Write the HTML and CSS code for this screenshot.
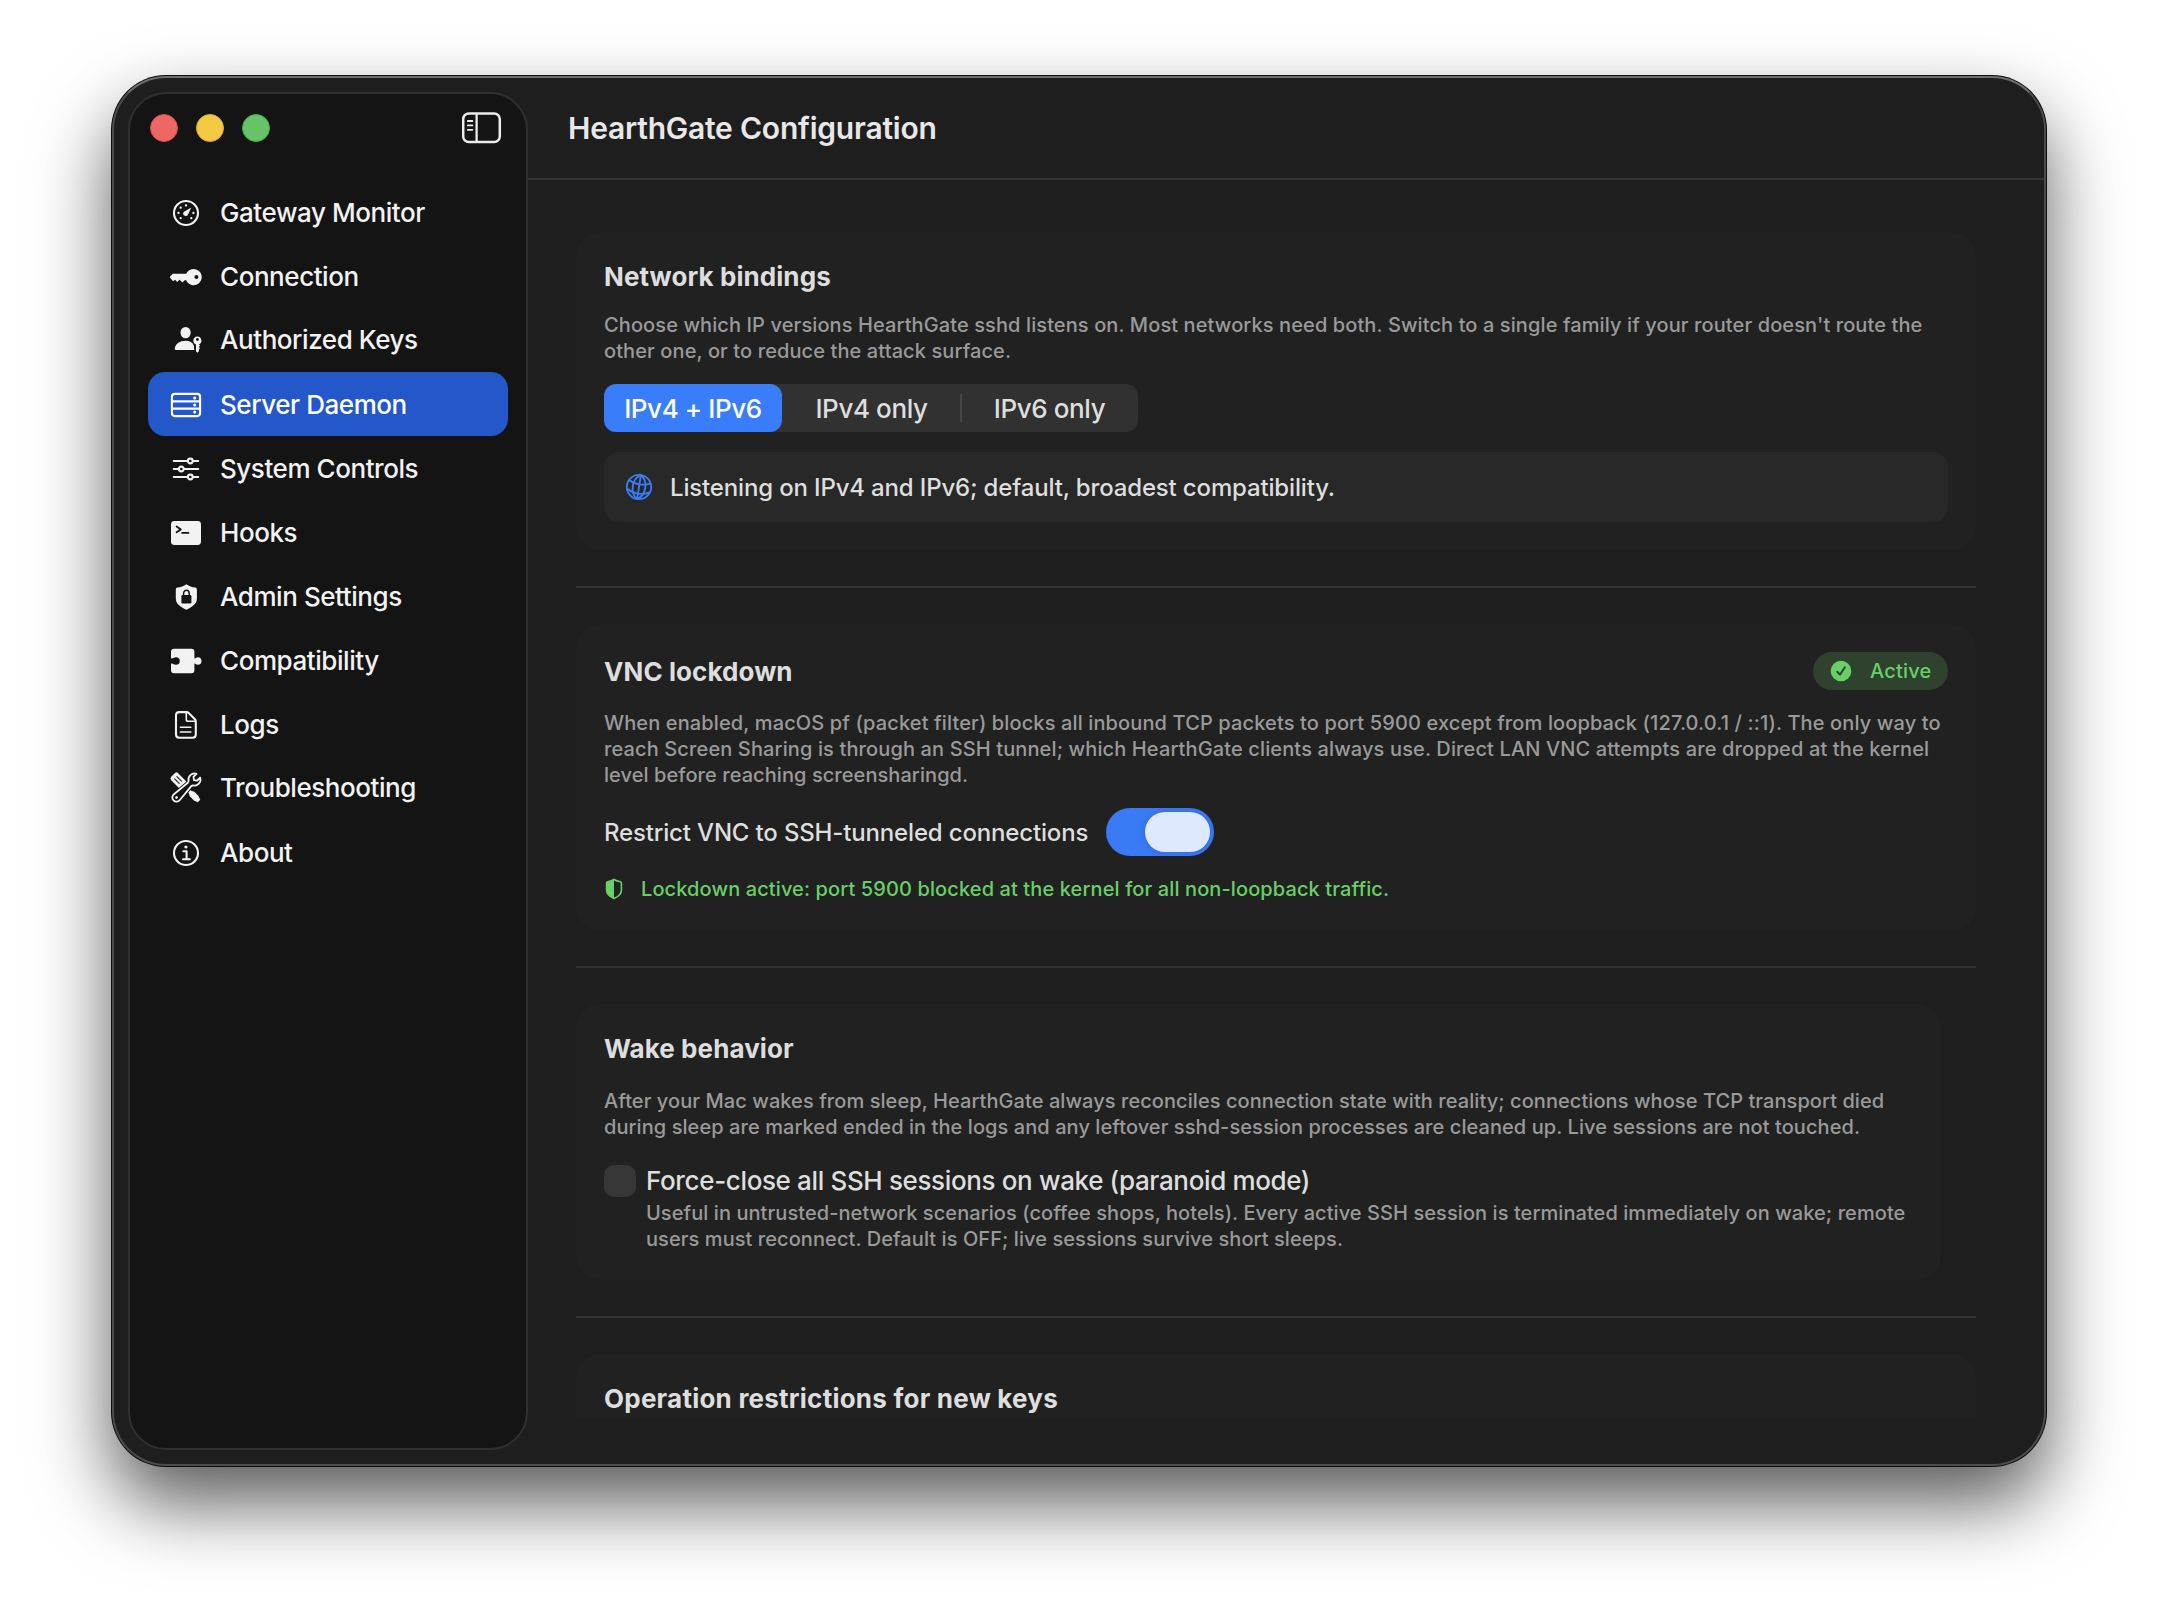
FILE: index.html
```
<!DOCTYPE html>
<html lang="en">
<head>
<meta charset="utf-8">
<title>HearthGate Configuration</title>
<link rel="stylesheet" href="styles.css">
</head>
<body>
<div class="window">
  <aside class="sidebar">
    <div class="sidebar-top">
      <div class="lights">
        <span class="light light-close"></span>
        <span class="light light-min"></span>
        <span class="light light-zoom"></span>
      </div>
      <svg class="toggle-sidebar" viewBox="0 0 40 32" fill="none" stroke="#ececec">
        <rect x="1.2" y="1.4" width="36.6" height="28.6" rx="5.6" stroke-width="2.5"/>
        <path d="M14.6 2v28" stroke-width="2.3"/>
        <path d="M5.8 9h4.6M5.8 13.4h4.6M5.8 17.8h4.6" stroke-width="1.8" stroke-linecap="round"/>
      </svg>
    </div>
    <nav class="nav">
      <a class="nav-item">
        <svg class="nav-icon" viewBox="-18 -18 36 36">
          <circle r="12" class="line"/>
          <g class="solid"><circle cy="-7.6" r="1.15"/><circle cx="-5.3" cy="-5.3" r="1.15"/><circle cx="-7.5" r="1.15"/><circle cx="-5.3" cy="5.2" r="1.15"/><circle cx="5.3" cy="5.2" r="1.15"/><circle cx="7.4" r="1.15"/>
          <path d="M5.3-5.4L1.9 1.7A2.5 2.5 0 1 1-1.6-1.6Z"/></g>
        </svg>
        <span>Gateway Monitor</span>
      </a>
      <a class="nav-item">
        <svg class="nav-icon" viewBox="-18 -18 36 36">
          <path class="solid" fill-rule="evenodd" d="M-13.2-3.2H.2A8.1 8.1 0 1 1 .2 3.3L-1.3 3.2-3.6 5.4-6.4 2.7-8.9 5-10.9 2.8-12.9 4.2-15.8.9Q-16.4 0-15.7-.8ZM10.4-2A2 2 0 1 0 10.4 2 2 2 0 1 0 10.4-2Z"/>
        </svg>
        <span>Connection</span>
      </a>
      <a class="nav-item nav-item-up">
        <svg class="nav-icon" viewBox="-18 -18 36 36">
          <ellipse class="solid" cx="-.4" cy="-7.4" rx="5.1" ry="5.7"/>
          <path class="solid" d="M-.5.7C4 .7 6.6 2.7 7.8 5.4L8.3 9.9H-10Q-11.6 9.9-11.2 8C-10.2 3.7-6.2.7-.5.7Z"/>
          <path class="solid" fill-rule="evenodd" stroke="#141414" stroke-width="1.4" paint-order="stroke" d="M11.3-3.6A4.2 4.2 0 0 1 13 4.4L14 5.6 12.9 7 13.9 8.3 12.9 9.6V11.2L11.5 12.8 10 11.4V4.5A4.2 4.2 0 0 1 11.3-3.6ZM11.4-1.9A1.4 1.4 0 1 0 11.4.9 1.4 1.4 0 1 0 11.4-1.9Z"/>
        </svg>
        <span>Authorized Keys</span>
      </a>
      <a class="nav-item nav-item-active">
        <svg class="nav-icon" viewBox="-18 -18 36 36">
          <rect class="line" x="-14.1" y="-11.1" width="28.2" height="22.2" rx="3"/>
          <path class="line" d="M-14-3.6H14M-14 3.6H14"/>
          <g class="solid"><circle cx="8.7" cy="-7.1" r="1.5"/><circle cx="8.7" r="1.5"/><circle cx="8.7" cy="7.1" r="1.5"/></g>
        </svg>
        <span>Server Daemon</span>
      </a>
      <a class="nav-item">
        <svg class="nav-icon" viewBox="-18 -18 36 36">
          <path class="line" stroke-linecap="round" d="M-12.2-8H1.6M7-8h5.2M-12.2 0H-7.4M-2 0H12.2M-12.2 8H1.6M7 8h5.2"/>
          <g class="line"><circle cx="4.3" cy="-8" r="2.4"/><circle cx="-4.7" r="2.4"/><circle cx="4.3" cy="8" r="2.4"/></g>
        </svg>
        <span>System Controls</span>
      </a>
      <a class="nav-item">
        <svg class="nav-icon" viewBox="-18 -18 36 36">
          <rect class="solid" x="-15" y="-12" width="30" height="24" rx="3.4"/>
          <path d="M-9.4-6.5-5.2-3.6-9.4-.8M-3.8-.1H2.4" fill="none" stroke="#141414" stroke-width="1.8" stroke-linecap="round" stroke-linejoin="round"/>
        </svg>
        <span>Hooks</span>
      </a>
      <a class="nav-item">
        <svg class="nav-icon" viewBox="-18 -18 36 36">
          <path class="solid" d="M.4-12.7C3-10.8 6.2-9.7 9.2-9.4Q10.9-9.2 10.9-7.6V1.6C10.9 7 6.4 10 .4 12.8-5.6 10-10.2 7-10.2 1.6V-7.6Q-10.2-9.2-8.5-9.4C-5.4-9.7-2.2-10.8.4-12.7Z"/>
          <rect x="-4.6" y="-2" width="10" height="8.6" rx="1.3" fill="#141414"/>
          <path d="M-2.4-1.5V-3.6A2.8 3.1 0 0 1 3.2-3.6V-1.5" fill="none" stroke="#141414" stroke-width="1.5"/>
        </svg>
        <span>Admin Settings</span>
      </a>
      <a class="nav-item">
        <svg class="nav-icon" viewBox="-18 -18 36 36">
          <path class="solid" d="M-12-12.3H5.4Q8.4-12.3 8.4-9.3V-2.6C9.4-2.2 9.8-3.8 11.9-3.8A3.6 3.8 0 0 1 11.9 3.8C9.8 3.8 9.4 2.2 8.4 2.6V9.3Q8.4 12.3 5.4 12.3H-12Q-15 12.3-15 9.3V2.7C-12.8 1.9-12.8 3.8-10 3.8A3.8 3.8 0 0 0-10-3.8C-12.8-3.8-12.8-1.9-15-2.7V-9.3Q-15-12.3-12-12.3Z"/>
        </svg>
        <span>Compatibility</span>
      </a>
      <a class="nav-item">
        <svg class="nav-icon" viewBox="-18 -18 36 36">
          <path class="line" stroke-linejoin="round" d="M-6.8-12.9H.6Q1.8-12.9 2.7-12L8.9-5.7Q9.8-4.8 9.8-3.5V9.6Q9.8 12.8 6.6 12.8H-6.8Q-10 12.8-10 9.6V-9.7Q-10-12.9-6.8-12.9Z"/>
          <path class="line thin" d="M.3-12.6V-5.6Q.3-3.7 2.2-3.7H9.4M-5.6 2.3H4.8M-5.6 7H4.8" stroke-linecap="round"/>
        </svg>
        <span>Logs</span>
      </a>
      <a class="nav-item nav-item-up">
        <svg class="nav-icon" viewBox="-18 -18 36 36">
          <g transform="rotate(-45)">
            <path class="solid" d="M-4.9-16Q-4.9-18.4-2.5-18.4H2.5Q4.9-18.4 4.9-16V-4H-4.9Z"/>
            <path d="M-1.6-14.5V-8M1.6-14.5V-8" stroke="#141414" stroke-width="1" stroke-linecap="round"/>
            <path class="solid" d="M-1.7-4H1.7V5.5L3.2 8.6V14.4L1.8 18.4H-1.8L-3.2 14.4V8.6L-1.7 5.5Z"/>
          </g>
          <g transform="rotate(45)">
            <path d="M-2.6-17.4V-13.2L0-11.2 2.6-13.2V-17.4A6.1 6.1 0 0 1 3-6.7L2.4-5 4.1 12.5A4.2 4.2 0 1 1-4.1 12.5L-2.4-5-3-6.7A6.1 6.1 0 0 1-2.6-17.4Z" fill="#141414" stroke="#141414" stroke-width="3.6"/>
            <path d="M-2.6-17.4V-13.2L0-11.2 2.6-13.2V-17.4A6.1 6.1 0 0 1 3-6.7L2.4-5 4.1 12.5A4.2 4.2 0 1 1-4.1 12.5L-2.4-5-3-6.7A6.1 6.1 0 0 1-2.6-17.4Z" class="line wrench" stroke-linejoin="round"/>
            <circle class="solid" cy="13.4" r="1.4"/>
          </g>
        </svg>
        <span>Troubleshooting</span>
      </a>
      <a class="nav-item">
        <svg class="nav-icon" viewBox="-18 -18 36 36">
          <circle r="12" class="line"/>
          <circle class="solid" cx="-.1" cy="-6" r="1.6"/>
          <path class="line" d="M-2.7-1.8H.6V6.2M-3 6.2H3.8" stroke-linecap="round" stroke-linejoin="round"/>
        </svg>
        <span>About</span>
      </a>
    </nav>
  </aside>

  <main class="main">
    <header class="toolbar"><h1>HearthGate Configuration</h1></header>
    <div class="content">
      <section class="card">
        <h2>Network bindings</h2>
        <p class="note">Choose which IP versions HearthGate sshd listens on. Most networks need both. Switch to a single family if your router doesn't route the<br>other one, or to reduce the attack surface.</p>
        <div class="segmented">
          <span class="segment segment-on">IPv4 + IPv6</span>
          <span class="segment">IPv4 only</span>
          <span class="segment segment-divided">IPv6 only</span>
        </div>
        <div class="info">
          <svg class="globe" viewBox="-15 -15 30 30" fill="none" stroke="#3a7dfa" stroke-width="1.8">
            <circle r="12.2"/>
            <g transform="rotate(9)">
              <path d="M0-12.2V12.2M0-12.2C-8.4-7-8.4 7 0 12.2M0-12.2C8.4-7 8.4 7 0 12.2"/>
              <path d="M-11-5.4C-5-1.8 5-1.8 11-5.4M-11.4 3.6C-5 7.6 5 7.6 11.4 3.6"/>
            </g>
          </svg>
          <span class="body-text">Listening on IPv4 and IPv6; default, broadest compatibility.</span>
        </div>
      </section>
      <hr class="rule">
      <section class="card">
        <div class="card-head">
          <h2>VNC lockdown</h2>
          <span class="badge">
            <svg class="badge-icon" viewBox="0 0 22 22"><circle cx="11" cy="11" r="10.3" fill="#68d067"/><path d="M7.2 11.7L10 14.6 14.9 7.3" fill="none" stroke="#2e422e" stroke-width="2" stroke-linecap="round" stroke-linejoin="round"/></svg>
            Active
          </span>
        </div>
        <p class="note note-wide">When enabled, macOS pf (packet filter) blocks all inbound TCP packets to port 5900 except from loopback (127.0.0.1 / ::1). The only way to<br>reach Screen Sharing is through an SSH tunnel; which HearthGate clients always use. Direct LAN VNC attempts are dropped at the kernel<br><span class="note-tight">level before reaching screensharingd.</span></p>
        <div class="switch-row">
          <span class="body-text">Restrict VNC to SSH-tunneled connections</span>
          <span class="switch"><span class="knob"></span></span>
        </div>
        <div class="status">
          <svg class="status-icon" viewBox="0 0 20 22"><path d="M10 1.5C12 2.9 14.3 3.5 16.4 3.8Q17.4 4 17.4 5V12.2C17.4 16.4 14.3 18.6 10 20.5 5.7 18.6 2.6 16.4 2.6 12.2V5Q2.6 4 3.6 3.8C5.7 3.5 8 2.9 10 1.5Z" fill="none" stroke="#68d067" stroke-width="1.6"/><path d="M10 1.5V20.5C5.7 18.6 2.6 16.4 2.6 12.2V5Q2.6 4 3.6 3.8C5.7 3.5 8 2.9 10 1.5Z" fill="#68d067"/></svg>
          <span>Lockdown active: port 5900 blocked at the kernel for all non-loopback traffic.</span>
        </div>
      </section>
      <hr class="rule">
      <section class="card card-loose">
        <h2>Wake behavior</h2>
        <p class="note note-tight">After your Mac wakes from sleep, HearthGate always reconciles connection state with reality; connections whose TCP transport died<br>during sleep are marked ended in the logs and any leftover sshd-session processes are cleaned up. Live sessions are not touched.</p>
        <div class="check-row">
          <span class="checkbox"></span>
          <div>
            <div class="check-label">Force-close all SSH sessions on wake (paranoid mode)</div>
            <p class="note note-tight">Useful in untrusted-network scenarios (coffee shops, hotels). Every active SSH session is terminated immediately on wake; remote<br>users must reconnect. Default is OFF; live sessions survive short sleeps.</p>
          </div>
        </div>
      </section>
      <hr class="rule">
      <section class="card card-cut">
        <h2 class="heading-wide">Operation restrictions for new keys</h2>
      </section>
    </div>
  </main>
</div>
</body>
</html>
```
FILE: styles.css
```
* { box-sizing: border-box; }

body {
  margin: 0;
  height: 1614px;
  padding: 76px 112px 148px;
  overflow: hidden;
  background: #fff;
  color: #dedede;
  font-family: Inter, "Liberation Sans", sans-serif;
}

h1, h2, p { margin: 0; }

.window {
  display: flex;
  height: 1390px;
  padding: 14px 0 14px 14px;
  background: #1e1e1e;
  border: 2px solid #4c4c4c;
  border-top-color: #6b6e6a;
  border-radius: 54px;
  box-shadow: 0 0 0 1px #0c0c0c, 0 37px 76px rgba(0, 0, 0, .65);
}

/* Sidebar */
.sidebar {
  width: 400px;
  flex: none;
  padding: 18px 18px;
  background: #141414;
  border: 2px solid #303030;
  border-radius: 38px;
}

.sidebar-top {
  display: flex;
  align-items: center;
  justify-content: space-between;
  height: 32px;
  padding: 0 6px 0 2px;
}

.lights { display: flex; gap: 18px; }
.light { width: 28px; height: 28px; border-radius: 50%; }
.light-close { background: #ee6765; border: 1px solid #d8484a; }
.light-min { background: #f4c944; border: 1px solid #e2ae2b; }
.light-zoom { background: #64c466; border: 1px solid #42ad45; }
.toggle-sidebar { width: 40px; height: 32px; }

.nav { padding-top: 36px; }

.nav-item {
  display: flex;
  align-items: center;
  gap: 16px;
  height: 64px;
  padding: 1px 20px 0;
  border-radius: 17px;
  color: #f2f2f2;
  font-size: 26px;
  font-weight: 450;
  letter-spacing: -.44px;
  white-space: nowrap;
}

.nav-item-up { padding: 0 20px 1px; }
.nav-item-active { background: #2457c9; color: #fff; }
.nav-icon { width: 36px; height: 36px; flex: none; }
.solid { fill: currentColor; }
.line { fill: none; stroke: currentColor; stroke-width: 2.1; }
.thin { stroke-width: 1.6; }
.wrench { stroke-width: 1.8; }

/* Main pane */
.main {
  flex: 1;
  display: flex;
  flex-direction: column;
  margin: -14px 0 32px;
}

.toolbar {
  display: flex;
  align-items: center;
  flex: none;
  height: 102px;
  padding-left: 40px;
  border-bottom: 2px solid #323232;
}

h1 {
  color: #e8e8e8;
  font-size: 30px;
  font-weight: 620;
  letter-spacing: -.22px;
}

.content {
  flex: 1;
  min-height: 0;
  overflow: hidden;
  padding: 52px 68px 0 48px;
}

.card {
  display: flex;
  flex-direction: column;
  gap: 20px;
  padding: 28px;
  background: #212121;
  border-radius: 24px;
}

.card-loose { gap: 24px; margin-right: 35px; }
.card-cut { height: 120px; }

h2 {
  height: 32px;
  padding-top: 1px;
  font-size: 26px;
  font-weight: 700;
  line-height: 32px;
  letter-spacing: .08px;
}

.heading-wide { letter-spacing: .23px; }

.rule {
  height: 2px;
  margin: 36px 0;
  border: 0;
  background: #323232;
}

.note {
  color: #9a9a9a;
  font-size: 20px;
  font-weight: 450;
  line-height: 26px;
  letter-spacing: .1px;
  white-space: nowrap;
}

.note-wide { letter-spacing: .125px; }
.note-tight { letter-spacing: .07px; }

.body-text {
  padding-top: 1px;
  font-size: 24px;
  font-weight: 450;
  line-height: 32px;
  letter-spacing: -.16px;
  white-space: nowrap;
}

.segmented {
  display: flex;
  align-self: flex-start;
  height: 48px;
  border-radius: 12px;
  background: #313131;
}

.segment {
  display: flex;
  align-items: center;
  justify-content: center;
  width: 178px;
  padding-left: 1px;
  border-radius: 12px;
  font-size: 26px;
  font-weight: 450;
  letter-spacing: -.4px;
}

.segment-on { padding-left: 0; background: #3a7dfa; color: #fff; }

.segment-divided {
  background: linear-gradient(#474747, #474747) 0 50% / 2px 28px no-repeat;
}

.info {
  display: flex;
  align-items: center;
  gap: 16px;
  height: 70px;
  padding: 0 20px;
  border-radius: 15px;
  background: #282828;
}

.globe { width: 30px; height: 30px; }

.card-head {
  display: flex;
  align-items: center;
  justify-content: space-between;
  height: 38px;
}

.badge {
  display: flex;
  align-items: center;
  gap: 18px;
  width: 135px;
  height: 38px;
  padding-left: 17px;
  border-radius: 19px;
  background: #2e422e;
  color: #68d067;
  font-size: 20px;
  font-weight: 550;
  letter-spacing: .2px;
}

.badge-icon { width: 22px; height: 22px; flex: none; }

.switch-row { display: flex; align-items: center; gap: 18px; height: 48px; }

.switch {
  display: flex;
  justify-content: flex-end;
  width: 108px;
  height: 48px;
  padding: 4px;
  border-radius: 24px;
  background: #3a7af5;
}

.knob {
  width: 65px;
  height: 40px;
  border-radius: 20px;
  background: #dfe9fd;
  box-shadow: 0 0 8px rgba(0, 0, 60, .15);
}

.status {
  display: flex;
  align-items: center;
  gap: 17px;
  height: 26px;
  color: #68d067;
  font-size: 20px;
  font-weight: 450;
  letter-spacing: .11px;
  white-space: nowrap;
}

.status-icon { width: 20px; height: 22px; }

.check-row { display: flex; gap: 10px; }

.checkbox {
  width: 32px;
  height: 32px;
  flex: none;
  margin-top: 1px;
  border-radius: 10px;
  background: #373737;
}

.check-label {
  margin-bottom: 2px;
  font-size: 26px;
  font-weight: 450;
  line-height: 34px;
  letter-spacing: -.36px;
  white-space: nowrap;
}
```
